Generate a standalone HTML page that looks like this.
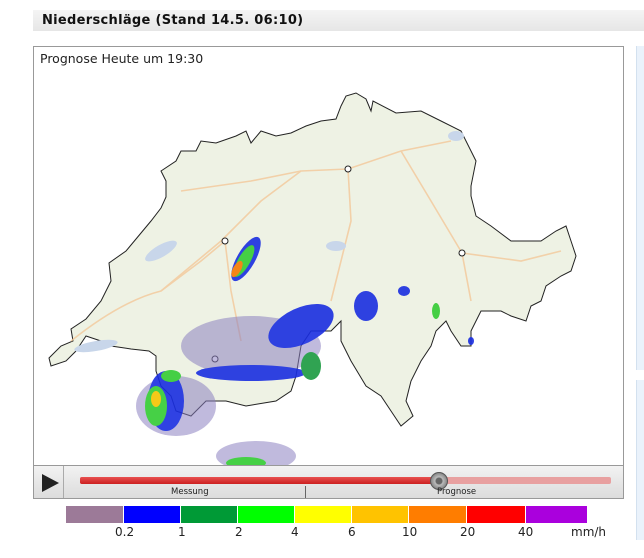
<!DOCTYPE html>
<html><head><meta charset="utf-8"><style>
body{margin:0;width:644px;height:558px;background:#fff;font-family:"DejaVu Sans","Liberation Sans",sans-serif;position:relative;overflow:hidden}
.hdr{position:absolute;left:33px;top:10px;width:611px;height:21px;background:linear-gradient(#f4f4f4,#e6e6e6)}
.hdr span{position:absolute;left:9px;top:3px;font-weight:bold;font-size:13px;color:#111;letter-spacing:0.3px}
.map{position:absolute;left:33px;top:46px;width:589px;height:419px;border:1px solid #999;border-bottom:none;background:#fff;overflow:hidden}
.map .t{position:absolute;left:6px;top:4px;font-size:12.5px;color:#222}
.ctl{position:absolute;left:33px;top:465px;width:591px;height:34px;background:linear-gradient(#f2f2f2,#dcdcdc);border:1px solid #999;box-sizing:border-box}
.side{position:absolute;left:636px;width:8px;background:#eaf2fb;border-left:1px solid #d3e1ef}
.lg{position:absolute;top:506px;height:17px}
.lt{position:absolute;top:525px;font-size:12px;color:#222}
</style></head><body>
<div class="hdr"><span>Niederschläge (Stand 14.5. 06:10)</span></div>
<div class="side" style="top:46px;height:324px"></div>
<div class="side" style="top:380px;height:160px"></div>
<div class="map"><div class="t">Prognose Heute um 19:30</div>
<svg width="589" height="419" viewBox="33 46 589 419" style="position:absolute;left:0;top:0">
<polygon fill="#eef2e4" stroke="#222" stroke-width="1" points="48,357 60,345 72,340 70,328 85,318 100,300 110,280 108,262 125,250 140,232 150,220 160,207 165,196 165,180 160,170 175,160 180,150 195,150 200,140 215,142 235,135 245,130 250,142 260,130 275,135 290,132 305,125 320,120 335,118 340,105 345,95 355,92 365,98 370,110 372,100 395,112 420,110 440,120 460,130 470,150 475,160 470,185 470,195 475,215 490,225 510,240 540,240 555,230 565,225 570,240 575,255 570,270 560,275 545,285 540,300 530,305 525,320 510,315 500,310 480,310 470,330 470,345 460,345 450,330 445,320 435,330 430,345 420,360 410,380 405,400 412,415 400,425 390,410 380,395 365,385 350,360 340,340 340,320 330,330 310,330 300,345 295,375 290,390 275,400 245,405 225,400 205,400 190,415 175,410 170,395 160,385 155,370 155,355 148,350 130,348 110,345 100,340 85,335 75,350 65,360 50,365"/>
<g fill="none" stroke="#f3c89a" stroke-width="1.6" opacity=".8">
<path d="M70,340 Q120,300 160,290 L220,240 L260,200 L300,170 L347,168 L400,150 L450,140"/>
<path d="M347,168 L350,220 L330,300"/><path d="M224,240 L230,290 L240,340"/><path d="M160,290 L200,260 L224,240"/><path d="M400,150 L430,200 L461,252 L470,300"/><path d="M461,252 L520,260 L560,250"/><path d="M180,190 L250,180 L300,170"/></g>
<g fill="#c8d6ea"><ellipse cx="160" cy="250" rx="18" ry="6" transform="rotate(-30 160 250)"/><ellipse cx="95" cy="345" rx="22" ry="5" transform="rotate(-10 95 345)"/><ellipse cx="335" cy="245" rx="10" ry="5"/><ellipse cx="455" cy="135" rx="8" ry="5"/></g>
<g fill="#fff" stroke="#222"><circle cx="347" cy="168" r="3"/><circle cx="224" cy="240" r="3"/><circle cx="461" cy="252" r="3"/><circle cx="214" cy="358" r="3"/></g>
<g opacity=".9">
<ellipse cx="250" cy="345" rx="70" ry="30" fill="#8a7fc0" opacity=".6"/>
<ellipse cx="300" cy="325" rx="35" ry="18" fill="#1a2ee0" transform="rotate(-25 300 325)"/>
<ellipse cx="250" cy="372" rx="55" ry="8" fill="#1a2ee0"/>
<ellipse cx="175" cy="405" rx="40" ry="30" fill="#8a7fc0" opacity=".6"/>
<ellipse cx="165" cy="400" rx="18" ry="30" fill="#1a2ee0"/>
<ellipse cx="155" cy="405" rx="11" ry="20" fill="#33cc33"/>
<ellipse cx="155" cy="398" rx="5" ry="8" fill="#f5c400"/>
<ellipse cx="170" cy="375" rx="10" ry="6" fill="#33cc33"/>
<ellipse cx="310" cy="365" rx="10" ry="14" fill="#1a9a40"/>
<ellipse cx="255" cy="455" rx="40" ry="15" fill="#8a7fc0" opacity=".6"/>
<ellipse cx="245" cy="462" rx="20" ry="6" fill="#33cc33"/>
<ellipse cx="245" cy="258" rx="9" ry="25" fill="#1a2ee0" transform="rotate(30 245 258)"/>
<ellipse cx="243" cy="260" rx="6" ry="18" fill="#33cc33" transform="rotate(30 243 260)"/>
<ellipse cx="236" cy="268" rx="4" ry="9" fill="#f57a00" transform="rotate(30 236 268)"/>
<ellipse cx="435" cy="310" rx="4" ry="8" fill="#33cc33"/><ellipse cx="403" cy="290" rx="6" ry="5" fill="#1a2ee0"/>
<ellipse cx="470" cy="340" rx="3" ry="4" fill="#1a2ee0"/>
<ellipse cx="365" cy="305" rx="12" ry="15" fill="#1a2ee0"/>
</g></svg></div>
<div class="ctl">
<div style="position:absolute;left:0;top:0;width:29px;height:32px;border-right:1px solid #aaa"></div>
<div style="position:absolute;left:8px;top:8px;width:0;height:0;border-left:17px solid #222;border-top:9px solid transparent;border-bottom:9px solid transparent"></div>
<div style="position:absolute;left:46px;top:11px;width:531px;height:7px;background:#e8a0a0;border-radius:2px"></div>
<div style="position:absolute;left:46px;top:11px;width:358px;height:7px;background:linear-gradient(#e85050,#cc2020);border-radius:2px"></div>
<div style="position:absolute;left:396px;top:6px;width:16px;height:16px;border-radius:50%;background:radial-gradient(circle at 50% 50%,#666 0 3px,#bbb 4px,#888 8px);border:1px solid #555"></div>
<div style="position:absolute;left:271px;top:20px;width:1px;height:12px;background:#666"></div>
<div style="position:absolute;left:137px;top:21px;font-size:8.5px;color:#222">Messung</div>
<div style="position:absolute;left:403px;top:21px;font-size:8.5px;color:#222">Prognose</div>
</div>
<div class="lg" style="left:66px;width:57px;background:#9c7a98"></div>
<div class="lg" style="left:124px;width:56px;background:#0000ff"></div>
<div class="lg" style="left:181px;width:56px;background:#009a36"></div>
<div class="lg" style="left:238px;width:56px;background:#00ff00"></div>
<div class="lg" style="left:295px;width:56px;background:#ffff00"></div>
<div class="lg" style="left:352px;width:56px;background:#ffc300"></div>
<div class="lg" style="left:409px;width:57px;background:#ff7d00"></div>
<div class="lg" style="left:467px;width:58px;background:#ff0000"></div>
<div class="lg" style="left:526px;width:61px;background:#aa00dd"></div>
<div class="lt" style="left:115px">0.2</div><div class="lt" style="left:178px">1</div><div class="lt" style="left:235px">2</div><div class="lt" style="left:291px">4</div><div class="lt" style="left:348px">6</div><div class="lt" style="left:402px">10</div><div class="lt" style="left:460px">20</div><div class="lt" style="left:518px">40</div><div class="lt" style="left:571px">mm/h</div>
</body></html>
